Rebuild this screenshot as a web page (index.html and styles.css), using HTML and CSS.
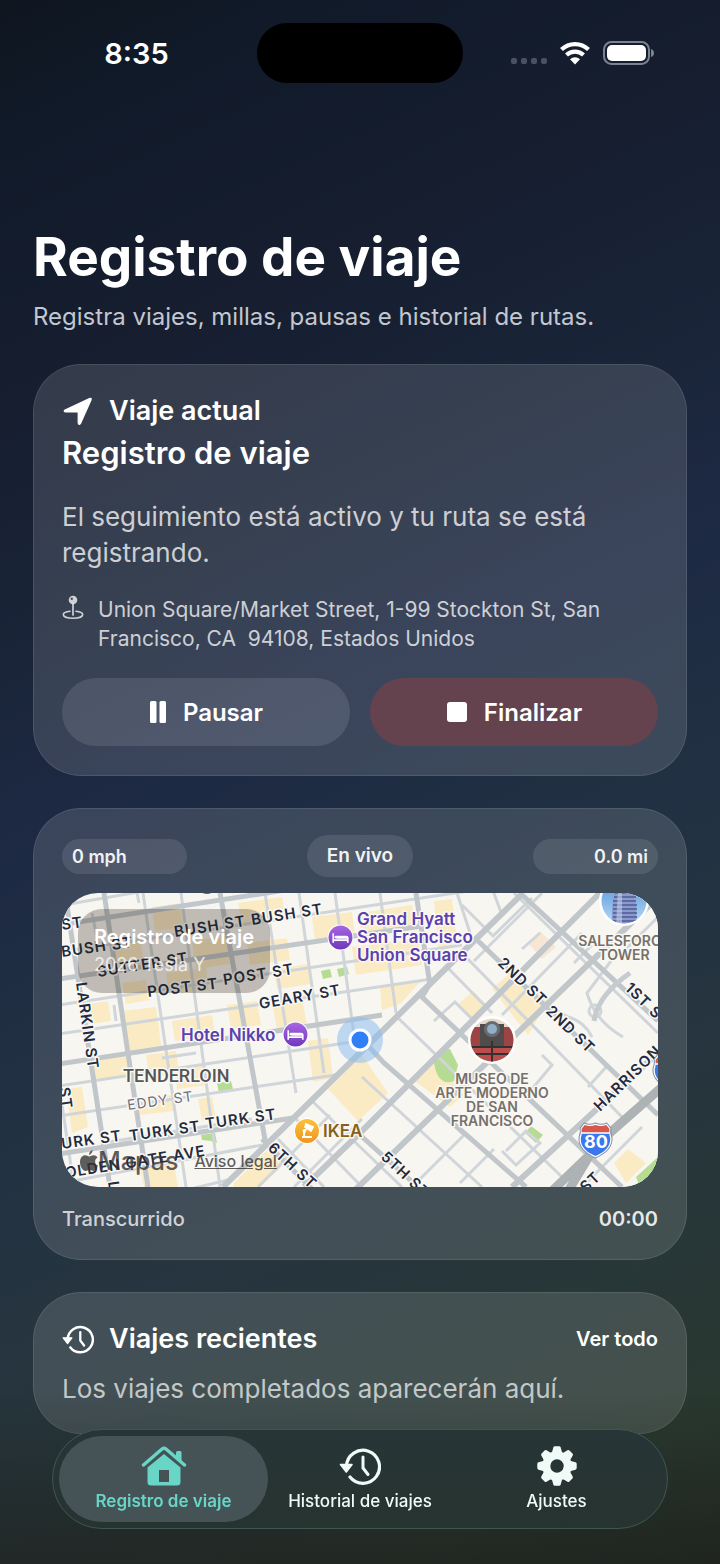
FILE: index.html
```html
<!DOCTYPE html>
<html lang="es">
<head>
  <meta charset="UTF-8">
  <meta name="viewport" content="width=device-width, initial-scale=1.0">
  <title>Registro de viaje</title>
  <link rel="stylesheet" href="styles.css">
</head>
<body>
  <svg class="defs" width="0" height="0" aria-hidden="true">
    <symbol id="history" viewBox="0 0 42 38">
      <path d="M7.500 19a16.500 16.500 0 1 1 3.500 11" fill="none" stroke="currentColor" stroke-width="3.200" stroke-linecap="round"/>
      <path d="M1.500 17.500h11.500l-5.700 7.500z" fill="currentColor" stroke="currentColor" stroke-width="1.600" stroke-linejoin="round"/>
      <path d="M24 10v11l5 6.500" fill="none" stroke="currentColor" stroke-width="3" stroke-linecap="round" stroke-linejoin="round"/>
    </symbol>
    <symbol id="bed" viewBox="0 0 26 26">
      <circle cx="13" cy="13" r="12.500" fill="#fff"/>
      <circle cx="13" cy="13" r="11.500" fill="url(#violet)"/>
      <path d="M6 9v9M6 15.500h14M20 18v-4.500h-10V12h8.500q1.500 0 1.500 1.500" fill="none" stroke="#fff" stroke-width="1.600"/>
      <circle cx="8.500" cy="12.700" r="1.300" fill="#fff"/>
    </symbol>
    <symbol id="shield" viewBox="0 0 36 36">
      <path d="M7 1q5 2.500 11 0q6 2.500 11 0l4 5q-1 4 1 9c1 10-7 16-16 20C9 31 1 25 2 15q2-5 1-9z" fill="#fff" stroke="#7c8db0" stroke-width="1"/>
      <path d="M7.500 3q5 2 10.500 0q5.500 2 10.500 0l3 3.500V10h-27V6.500z" fill="#d9564b"/>
      <path d="M4.500 11.500h27q0 2 .8 4c.5 9-6 14-14.300 17.500C9.700 29.500 3.200 24.500 3.700 15.500q.8-2 .8-4z" fill="#3877ee"/>
    </symbol>
    <linearGradient id="violet" x1="0" y1="0" x2="0" y2="1"><stop offset="0" stop-color="#a866e2"/><stop offset="1" stop-color="#7038bd"/></linearGradient>
    <linearGradient id="amber" x1="0" y1="0" x2="0" y2="1"><stop offset="0" stop-color="#fbc13b"/><stop offset="1" stop-color="#ee9620"/></linearGradient>
    <linearGradient id="sky" x1="0" y1="0" x2="0" y2="1"><stop offset="0" stop-color="#4d8fd8"/><stop offset="1" stop-color="#b8dcf5"/></linearGradient>
  </svg>

  <div class="status-bar">
    <span class="clock">8:35</span>
    <span class="island"></span>
    <span class="status-icons">
      <svg width="36" height="8" viewBox="0 0 36 8" class="signal"><rect x="0" y="1" width="6" height="6" rx="2"/><rect x="10" y="1" width="6" height="6" rx="2"/><rect x="20" y="1" width="6" height="6" rx="2"/><rect x="30" y="1" width="6" height="6" rx="2"/></svg>
      <svg width="32" height="24" viewBox="0 0 32 24">
        <path d="M2.500 8.500a19.500 19.500 0 0 1 27 0M7.500 14a12.300 12.300 0 0 1 17 0" fill="none" stroke="#fff" stroke-width="4.200"/>
        <path d="M11 18.300a7.300 7.300 0 0 1 10 0l-5 5.200z" fill="#fff"/>
      </svg>
      <svg width="51" height="24" viewBox="0 0 51 24">
        <rect x="1" y="1" width="45" height="22" rx="7.500" fill="none" stroke="#7b8290" stroke-width="2"/>
        <rect x="4" y="4" width="39" height="16" rx="5" fill="#fff"/>
        <path d="M48 8q3 1 3 4t-3 4z" fill="#7b8290"/>
      </svg>
    </span>
  </div>

  <main class="page">
    <header class="page-header">
      <h1>Registro de viaje</h1>
      <p>Registra viajes, millas, pausas e historial de rutas.</p>
    </header>

    <section class="card trip">
      <div class="card-title">
        <svg width="32" height="30" viewBox="0 0 32 30"><path d="M3 14 27.500 2.500q2.200-.7 1.500 1.500L18.500 27.500q-1.800 2-2.300-.5V16H4q-3-.3-1-2z" fill="#fff" stroke="#fff" stroke-width="1.200" stroke-linejoin="round"/></svg>
        <h2>Viaje actual</h2>
      </div>
      <h3>Registro de viaje</h3>
      <p class="body-text">El seguimiento está activo y tu ruta se está registrando.</p>
      <div class="address">
        <svg width="22" height="26" viewBox="0 0 22 26">
          <circle cx="11" cy="5" r="4.300" fill="currentColor"/><circle cx="9.800" cy="3.800" r="1.200" fill="#485160"/>
          <path d="M11 9v11" stroke="currentColor" stroke-width="1.700" stroke-linecap="round"/>
          <path d="M8 16.300c-4 .4-6.700 1.600-6.700 3.300 0 2.200 4.300 3.700 9.700 3.700s9.700-1.500 9.700-3.700c0-1.700-2.700-2.900-6.700-3.300" fill="none" stroke="currentColor" stroke-width="1.600" stroke-linecap="round"/>
        </svg>
        <p>Union Square/Market Street, 1-99 Stockton St, San Francisco, CA&nbsp; 94108, Estados Unidos</p>
      </div>
      <div class="actions">
        <button type="button" class="btn">
          <svg width="18" height="22" viewBox="0 0 18 22"><rect x="1" width="6.500" height="22" rx="1.500" fill="#fff"/><rect x="10.500" width="6.500" height="22" rx="1.500" fill="#fff"/></svg>
          Pausar
        </button>
        <button type="button" class="btn btn-stop">
          <svg width="22" height="22" viewBox="0 0 22 22"><rect x="1" y="1" width="20" height="20" rx="3" fill="#fff"/></svg>
          Finalizar
        </button>
      </div>
    </section>

    <section class="card live">
      <div class="stats">
        <span class="pill">0 mph</span>
        <span class="pill pill-live">En vivo</span>
        <span class="pill pill-end">0.0 mi</span>
      </div>

      <div class="map">
        <svg class="map-art" viewBox="0 0 596 294" preserveAspectRatio="xMidYMid slice">
          <rect width="596" height="294" fill="#f8f6f1"/>
          <!-- blocks north of Market -->
          <g fill="#fbebc4">
            <path d="M48 48l30-4 4 28-30 4zM90 14l28-4 3 24-28 4zM130 48l34-5 4 28-34 5zM60 90l24-3 4 20-24 4zM104 80l40-5 3 22-40 5zM176 10l44-6 4 22-44 6zM185 50l40-5 3 22-40 5zM212 76l34-5 3 20-34 5zM250 24l40-5 3 24-40 5zM296 20l54-8 4 24-54 8zM290 54l66-8 4 26-66 10zM318 94l40-5-20 22-18 6zM372 8l18-2 5 42-18 14zM20 112l26-4 3 20-26 4zM60 118l34-4 6 44-34 4zM110 128l40-6 3 20-40 6zM165 112l30-4 4 24-30 4zM210 110l30-4 5 26-30 4zM246 148l20-3 5 40-20 4zM30 166l38-5 3 22-38 5zM84 162l30-4 3 22-30 4zM4 196l16-2 6 40-16 6zM76 206l34-4 2 16-34 4zM112 176l30-4 3 20-30 4zM136 206l14-2 4 22-14 2zM78 276l34-5 4 23-34 0z"/>
          </g>
          <g fill="#b5dc92"><path d="M155 190l14-2 2 8-14 4zM139 242l14-2 2 10-6-2-9-1zM259 78l9-2 2 8-9 2zM275 76l10-2 2 7-10 3z"/></g>
          <g fill="none" stroke="#d0d5d9" stroke-width="3">
            <path d="M-10 14L100-5M-10 60L420-4M-10 113L400 52M-10 142L370 86M-10 194L310 146M-10 224L280 181M-10 292L200 252M70 310L170 286M40 250L190 226"/>
            <path d="M-22 60L12 294M81 0L124 294M119 0L158 294M203 0L234 200M237 0L262 180M273 0L293 150M318 0L334 120M395 0L411 49M430-5L440 22"/>
            <path d="M100 165L134 160M52 112L54 128M75 0L77 10M30 20L36 50"/>
          </g>
          <g fill="none" stroke="#c0c6ca" stroke-width="5">
            <path d="M-10 33L230-4M-10 87L360 33M-10 172L320 122M-10 262L250 222"/>
            <path d="M42 0L86 294M3 0L48 294M158 0L204 252M354 0L368 92"/>
          </g>

          <!-- everything south of Market -->
          <path d="M161 294L298 160L370 89L461 0H596V294z" fill="#f8f6f1"/>
          <g fill="#fbebc4"><path d="M172 290l42-42 18 14-34 32h-26zM266 196l34-34 26 38-30 28zM350 186l22-20 30 36-14 12zM430 96l18-16 40 26-22 36zM552 270l14-14 18 14-20 20zM395 112l16-14 16 16-16 14z"/></g>
          <path d="M466 50l12-12 16 16-14 12z" fill="#f8e6d5"/>
          <g fill="#b5dc92"><path d="M372 170q2-14 16-14l8 16-4 16q-16 6-20-18zM463 240l6-7 12 9-7 8zM574 284l22-20v12l-18 18z"/></g>
          <g fill="none" stroke="#d0d5d9" stroke-width="3">
            <path d="M452 0L596 140M400 60L560 224M385 74L430 120M335 124L500 284M470 5L430 44M480 0L412 68M300 184L420 294M250 208L340 294M234 226L300 294M216 246L262 294"/>
            <path d="M232 294L300 226M196 294L268 222M394 108L372 128M392 108L420 136M440 122L520 40M460 56L478 40M512 70L530 52M560 60L596 24M350 294L402 242L376 218M398 290L432 256M440 258l14 14 24-22-14-12-20 20M340 252L382 210M470 196L490 172L480 162M526 194L546 172M520 294L580 234M400 12l30 30M486 112l20 12q16 4 24 20M555 60l-30 40q8 28 36 44"/>
            <circle cx="533" cy="118" r="6"/>
          </g>
          <g fill="none" stroke="#c0c6ca" stroke-width="6">
            <path d="M161 294L298 160L370 89L461 0M242 294L298 240L538 0M292 298L596 4M450 294L596 160"/>
            <path d="M298 144L322 170L464 294M366 94L360 104L560 294M412 44L596 222M298 242L356 294M200 246L252 298M458 0L596 128" stroke-width="5"/>
          </g>
          <path d="M505 300L534 252L600 194M490 298L540 250" fill="none" stroke="#adb3b5" stroke-width="9"/>
          <path d="M532 128q4-26 36-48" fill="none" stroke="#c6cbcf" stroke-width="5"/>

          <g class="street">
            <text x="0" y="37" transform="rotate(-8 0 37)">ST</text>
            <text x="0" y="64" transform="rotate(-8 0 64)">BUSH ST</text>
            <text x="113" y="44" transform="rotate(-9 113 44)">BUSH ST</text>
            <text x="190" y="32" transform="rotate(-9 190 32)">BUSH ST</text>
            <text x="36" y="84" transform="rotate(-9 36 84)">SUTTER ST</text>
            <text x="86" y="104" transform="rotate(-7 86 104)">POST ST</text>
            <text x="162" y="92" transform="rotate(-9 162 92)">POST ST</text>
            <text x="198" y="116" transform="rotate(-10 198 116)">GEARY ST</text>
            <text x="14" y="90" transform="rotate(82 14 90)">LARKIN ST</text>
            <text x="0" y="256" transform="rotate(-8 0 256)">URK ST</text>
            <text x="68" y="248" transform="rotate(-8 68 248)">TURK ST</text>
            <text x="144" y="236" transform="rotate(-8 144 236)">TURK ST</text>
            <text x="4" y="285" transform="rotate(-9 4 285)">OLDEN GATE AVE</text>
            <text x="205" y="256" transform="rotate(43 205 256)">6TH ST</text>
            <text x="318" y="265" transform="rotate(43 318 265)">5TH ST</text>
            <text x="435" y="71" transform="rotate(44 435 71)">2ND ST</text>
            <text x="483" y="119" transform="rotate(44 483 119)">2ND ST</text>
            <text x="562" y="96" transform="rotate(44 562 96)">1ST ST</text>
            <text x="538" y="219" transform="rotate(-44 538 219)">HARRISON</text>
            <text x="524" y="300" transform="rotate(-44 524 300)">ST</text>
            <text x="-3" y="195" transform="rotate(82 -3 195)">ST</text>
            <text x="46" y="289" transform="rotate(82 46 289)">L</text>
          </g>
          <text class="street street-minor" x="66" y="217" transform="rotate(-8 66 217)">EDDY ST</text>
          <text class="district" x="61" y="189">TENDERLOIN</text>

          <circle cx="145" cy="-9" r="10" fill="#c02f78"/>
          <use href="#bed" x="265" y="31" width="27" height="27"/>
          <g class="hotel">
            <text x="295" y="32">Grand Hyatt</text>
            <text x="295" y="50">San Francisco</text>
            <text x="295" y="68">Union Square</text>
            <text x="119" y="148">Hotel Nikko</text>
          </g>
          <use href="#bed" x="220" y="128" width="27" height="27"/>

          <g class="landmark">
            <text x="562" y="53">SALESFORCE</text>
            <text x="562" y="67">TOWER</text>
            <text x="430" y="191">MUSEO DE</text>
            <text x="430" y="205">ARTE MODERNO</text>
            <text x="430" y="219">DE SAN</text>
            <text x="430" y="233">FRANCISCO</text>
          </g>
          <circle cx="562" cy="8" r="25" fill="#fff"/>
          <clipPath id="tower"><circle cx="562" cy="8" r="22.500"/></clipPath>
          <g clip-path="url(#tower)">
            <path d="M538-16h48v48h-48z" fill="url(#sky)"/>
            <path d="M554-6h16q6 14 4 40h-24q-1-26 4-40z" fill="#8c9bcb"/>
            <path d="M553 0h20M552 4h22M551 8h23M551 12h24M551 16h24M551 20h24M551 24h24M551 28h24" stroke="#4f5b96" stroke-width="1.500"/>
            <path d="M556-6h4v40h-6z" fill="#c3d0ea" opacity=".6"/>
          </g>

          <circle cx="430" cy="147" r="24" fill="#fff"/>
          <clipPath id="museum"><circle cx="430" cy="147" r="21.500"/></clipPath>
          <g clip-path="url(#museum)">
            <path d="M408 124h44v46h-44z" fill="#e5d9ca"/>
            <path d="M408 134h44v20h-44z" fill="#9c4343"/>
            <path d="M418 131h24v24h-24z" fill="#504c4c"/>
            <path d="M408 155h44v16h-44z" fill="#b94e4d"/>
            <path d="M408 154h44M410 161h40M430 148v24" stroke="#353133" stroke-width="2"/>
            <circle cx="430" cy="136" r="8" fill="#686b70"/><circle cx="430" cy="136" r="5" fill="#8fb0c8"/>
          </g>

          <circle cx="245" cy="238" r="13" fill="#fff"/>
          <circle cx="245" cy="238" r="12" fill="url(#amber)"/>
          <path d="M240 244h10M242 243v-5l4-5M242 238l-1-1M244 231l7 3-2 4-6-4z" fill="#fff" stroke="#fff" stroke-width="1.800"/>
          <text class="shop" x="261" y="244">IKEA</text>

          <circle cx="298" cy="147" r="23" fill="#8dbdf0" opacity=".55"/>
          <circle cx="298" cy="147" r="11.500" fill="#fff"/>
          <circle cx="298" cy="147" r="8.500" fill="#2f7ff6"/>

          <use href="#shield" x="515" y="229" width="37" height="37"/>
          <text class="route" x="534" y="255">80</text>
          <use href="#shield" x="589" y="160" width="37" height="37"/>
        </svg>

        <div class="map-credit">
          <svg width="18" height="22" viewBox="0 0 18 22"><path d="M12.500 0q.3 3-3.300 5.200Q8.600 2 12.500 0zM9 6.500c2-.2 2.600-1.200 4.600-1.200 1.700 0 3 .8 3.900 2.100-3.600 2.200-2.900 6.800.5 8.200-1 2.800-2.600 5.400-4.500 5.400-1.600 0-2.100-.9-4-.9s-2.500.9-4 .9C2.800 21 0 16.400 0 12.200 0 7.700 2.600 5.300 5.200 5.300c1.800 0 2.900 1.200 3.800 1.200z" fill="currentColor"/></svg>
          <span class="map-brand">Mapas</span>
          <a href="#">Aviso legal</a>
        </div>

        <div class="map-badge">
          <strong>Registro de viaje</strong>
          <span>2026 Tesla Y</span>
        </div>
      </div>

      <div class="elapsed">
        <span>Transcurrido</span>
        <span class="elapsed-time">00:00</span>
      </div>
    </section>

    <section class="card recent">
      <div class="card-title">
        <svg width="32" height="30"><use href="#history"/></svg>
        <h2>Viajes recientes</h2>
        <a href="#" class="see-all">Ver todo</a>
      </div>
      <p class="body-text">Los viajes completados aparecerán aquí.</p>
    </section>
  </main>

  <nav class="tab-bar">
    <a href="#" class="tab tab-active">
      <svg width="46" height="40" viewBox="0 0 46 40">
        <path d="M2.500 19 21 3q2-1.500 4 0l18.500 16" fill="none" stroke="currentColor" stroke-width="3.400" stroke-linecap="round" stroke-linejoin="round"/>
        <path d="M35 12V6.500q0-1.500 1.500-1.500h2.500q1.500 0 1.500 1.500v10z" fill="currentColor"/>
        <path d="M6.500 21.500 23 8l16.500 13.500V36q0 3.500-3.500 3.500H10q-3.500 0-3.500-3.500zM18 24v12h10V24z" fill="currentColor" fill-rule="evenodd"/>
      </svg>
      <span>Registro de viaje</span>
    </a>
    <a href="#" class="tab">
      <svg width="42" height="40"><use href="#history"/></svg>
      <span>Historial de viajes</span>
    </a>
    <a href="#" class="tab">
      <svg width="40" height="40" viewBox="-20 -20 40 40">
        <g fill="currentColor">
          <path id="tooth" d="M-5.500-12-3.700-18.500q.4-1.200 1.600-1.200h4.200q1.200 0 1.600 1.200L5.500-12z"/>
          <use href="#tooth" transform="rotate(45)"/><use href="#tooth" transform="rotate(90)"/><use href="#tooth" transform="rotate(135)"/><use href="#tooth" transform="rotate(180)"/><use href="#tooth" transform="rotate(225)"/><use href="#tooth" transform="rotate(270)"/><use href="#tooth" transform="rotate(315)"/>
        </g>
        <circle r="10.700" fill="none" stroke="currentColor" stroke-width="8"/>
      </svg>
      <span>Ajustes</span>
    </a>
  </nav>
</body>
</html>
```

FILE: styles.css
```css
* { box-sizing: border-box; }
body {
  margin: 0;
  min-height: 100vh;
  font-family: Inter, "Liberation Sans", sans-serif;
  color: #fff;
  background: linear-gradient(155deg, #0f1620 0%, #111a29 8%, #161e30 22%, #1a2539 35%, #1d2943 44%, #1f2d43 51%, #223142 60%, #26353f 72%, #29382f 92%, #253027 100%);
}
h1, h2, h3, p { margin: 0; }
svg { flex: none; }
a { color: inherit; text-decoration: none; }
.defs { position: absolute; }

/* status bar */
.status-bar { display: grid; grid-template-columns: 1fr 206px 1fr; align-items: center; height: 106px; }
.clock { font-size: 29px; font-weight: 600; text-align: center; padding-left: 16px; }
.island { height: 60px; border-radius: 30px; background: #000; }
.status-icons { display: flex; align-items: center; justify-content: flex-end; gap: 12px; padding-right: 66px; }
.signal { fill: #4a5160; align-self: flex-end; }

/* page */
.page { display: flex; flex-direction: column; gap: 32px; padding: 119px 33px 130px; }
.page-header h1 { font-size: 53px; line-height: 64px; font-weight: 700; }
.page-header p { margin-top: 13px; font-size: 24px; line-height: 30px; color: #c3c7cf; }

.card { padding: 29px 28px; border: 1px solid rgba(255,255,255,0.1); border-radius: 48px; background: rgba(255,255,255,0.13); }
.card-title { display: flex; align-items: center; gap: 15px; height: 34px; }
.card-title h2 { font-size: 27px; line-height: 34px; font-weight: 600; }
.body-text { font-size: 26px; line-height: 36px; color: rgba(255,255,255,0.76); }

.trip h3 { margin-top: 7px; font-size: 31px; line-height: 36px; font-weight: 600; }
.trip .body-text { margin-top: 28px; }
.address { display: flex; gap: 14px; margin-top: 24px; color: rgba(255,255,255,0.76); font-size: 21px; line-height: 29px; }
.actions { display: grid; grid-template-columns: 1fr 1fr; gap: 20px; margin-top: 25px; }
.btn { display: flex; align-items: center; justify-content: center; gap: 16px; height: 68px; border: 0; border-radius: 34px; background: rgba(255,255,255,0.11); color: #fff; font: inherit; font-size: 24px; font-weight: 600; }
.btn-stop { background: #64434f; }

.live { padding: 26px 28px 27px; }
.stats { display: grid; grid-template-columns: 125px auto 125px; justify-content: space-between; align-items: center; }
.pill { padding: 0 10px; border-radius: 18px; background: rgba(255,255,255,0.1); font-size: 18px; line-height: 35px; font-weight: 600; color: #f0f2f5; }
.pill-live { padding: 0 20px; border-radius: 21px; font-size: 19px; line-height: 42px; }
.pill-end { text-align: right; }

/* map */
.map { position: relative; margin-top: 16px; border-radius: 36px; overflow: hidden; }
.map-art { display: block; width: 100%; }
.map-art text { paint-order: stroke; stroke: #faf8f4; stroke-width: 3px; stroke-linejoin: round; }
.street { font-size: 15px; font-weight: 600; letter-spacing: 1px; fill: #222b40; }
.street-minor { font-size: 14px; font-weight: 400; fill: #6b717d; }
.district { font-family: "Liberation Sans Narrow", Roboto, sans-serif; font-size: 18px; font-weight: 500; fill: #555; }
.hotel { font-size: 17px; font-weight: 600; fill: #5b41ae; }
.landmark { font-size: 14px; font-weight: 600; fill: #76706a; text-anchor: middle; }
.shop { font-size: 17px; font-weight: 600; fill: #85611c; }
.map-art .route { font-size: 18px; font-weight: 700; fill: #fff; stroke: none; text-anchor: middle; }
.map-credit { position: absolute; left: 18px; bottom: 12px; display: flex; align-items: center; color: rgba(50,50,50,0.78); }
.map-brand { font-size: 25px; line-height: 28px; font-weight: 500; }
.map-credit a { margin-left: 16px; font-size: 16px; font-weight: 500; text-decoration: underline; }
.map-badge { position: absolute; left: 16px; top: 16px; display: flex; flex-direction: column; gap: 4px; padding: 16px; border-radius: 24px; background: rgba(40,30,20,0.27); font-size: 18px; line-height: 24px; }
.map-badge strong { font-size: 20px; font-weight: 600; }
.map-badge span { color: rgba(255,255,255,0.75); }

.elapsed { display: flex; justify-content: space-between; margin-top: 19px; font-size: 20px; line-height: 26px; font-weight: 500; color: rgba(255,255,255,0.75); }
.elapsed-time { font-weight: 600; color: rgba(255,255,255,0.88); }

.recent { padding-bottom: 26px; }
.recent .body-text { margin-top: 15px; color: rgba(255,255,255,0.7); }
.see-all { margin-left: auto; font-size: 20px; font-weight: 600; }

/* tab bar */
.tab-bar { position: fixed; z-index: 2; left: 52px; right: 52px; bottom: 35px; display: grid; grid-template-columns: 209px 1fr 209px; padding: 6px; height: 100px; border: 1px solid #3d5654; border-radius: 50px; background: linear-gradient(#273537, #27332f); }
.tab { display: flex; flex-direction: column; align-items: center; justify-content: center; gap: 4px; border-radius: 44px; font-size: 17px; line-height: 22px; font-weight: 500; color: #f0fbf7; white-space: nowrap; }
.tab-active { background: #465356; color: #68d5c7; font-weight: 600; }
body::after { content: ""; position: fixed; z-index: 1; left: 0; right: 0; bottom: 0; height: 170px; background: linear-gradient(rgba(28,28,26,0), rgba(28,28,26,0.55)); pointer-events: none; }
```
